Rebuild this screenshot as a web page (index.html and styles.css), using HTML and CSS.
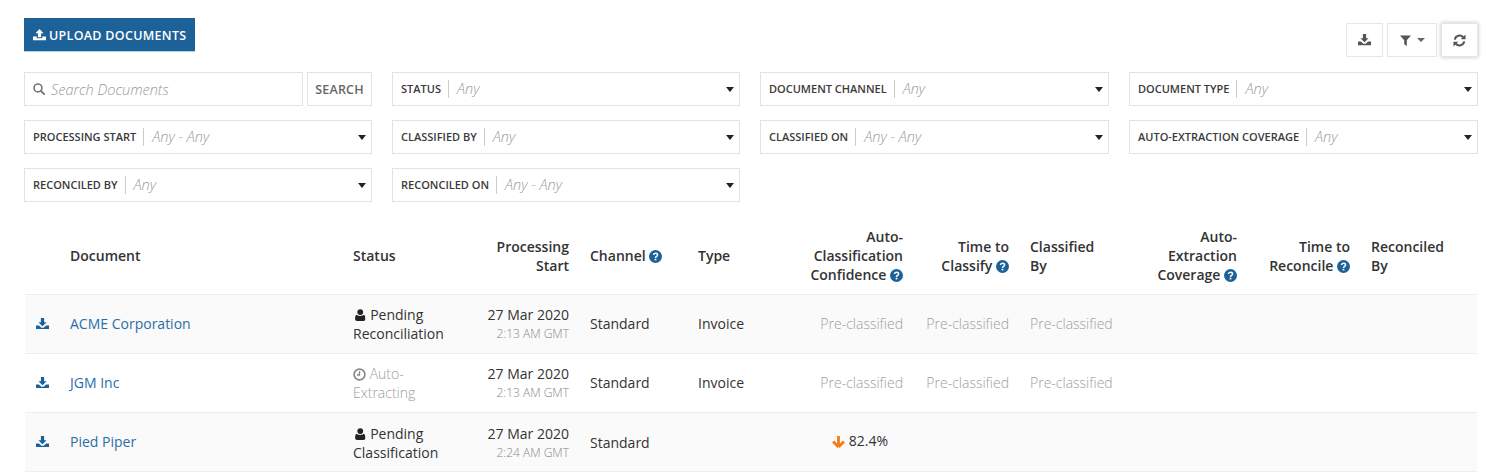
FILE: index.html
```html
<!DOCTYPE html>
<html lang="en">
<head>
<meta charset="utf-8">
<title>Documents</title>
<link rel="stylesheet" href="styles.css">
</head>
<body>
<svg class="sprite" aria-hidden="true">
  <symbol id="i-download" viewBox="0 0 16 14">
    <path d="M6 0h4v5h3L8 10 3 5h3z"/>
    <path d="M0 9h3.600L6.600 11.800h2.800L12.400 9H16v5H0z"/>
  </symbol>
  <symbol id="i-upload" viewBox="0 0 16 14">
    <path d="M8 0l5 5h-3v5H6V5H3z"/>
    <path d="M0 9h4.600v2.400h6.800V9H16v5H0z"/>
  </symbol>
  <symbol id="i-filter" viewBox="0 0 12 12"><path d="M0 .5h12L7.400 5.600V12L4.600 10V5.600z"/></symbol>
  <symbol id="i-refresh" viewBox="0 0 14 14">
    <path d="M1.900 6a5.200 5.200 0 0 1 9.200-2.300M12.100 8a5.200 5.200 0 0 1-9.200 2.300" fill="none" stroke="currentColor" stroke-width="2.200"/>
    <path d="M13.500.5v5.200H8.300zM.5 13.500V8.300h5.200z"/>
  </symbol>
  <symbol id="i-search" viewBox="0 0 14 14">
    <circle cx="5.800" cy="5.800" r="4.600" fill="none" stroke="currentColor" stroke-width="1.900"/>
    <path d="M9.200 9.200l3.800 3.800" stroke="currentColor" stroke-width="2.300" stroke-linecap="round"/>
  </symbol>
  <symbol id="i-user" viewBox="0 0 12 14">
    <circle cx="6" cy="3.600" r="3.400"/>
    <path d="M1.900 6.800c1 1 2.500 1.300 4.100 1.300s3.100-.3 4.100-1.300c1.300.4 1.900 2 1.900 4.600 0 1.700-.9 2.600-2.300 2.600H2.300C.9 14 0 13.100 0 11.400c0-2.600.6-4.200 1.900-4.600z"/>
  </symbol>
  <symbol id="i-clock" viewBox="0 0 14 14">
    <circle cx="7" cy="7" r="5.800" fill="none" stroke="currentColor" stroke-width="1.800"/>
    <path d="M7 3.400v4.100H4.200" fill="none" stroke="currentColor" stroke-width="1.500"/>
  </symbol>
  <symbol id="i-help" viewBox="0 0 12 12">
    <circle cx="6" cy="6" r="6"/>
    <path d="M4.100 4.600c.1-1.100.9-1.700 1.900-1.700 1.100 0 1.900.7 1.900 1.600 0 1.400-1.900 1.400-1.900 2.800" fill="none" stroke="#fff" stroke-width="1.400"/>
    <path d="M5.200 8.100h1.600v1.500H5.200z" fill="#fff"/>
  </symbol>
  <symbol id="i-arrow" viewBox="0 0 12 12">
    <path d="M6 11L1 6M6 11l5-5M6 10.500V1" fill="none" stroke="currentColor" stroke-width="2.600"/>
  </symbol>
</svg>

<header class="top">
  <button class="upload"><svg class="ic ic-btn"><use href="#i-upload"/></svg>UPLOAD DOCUMENTS</button>
  <div class="tools">
    <button class="tool tool-dl"><svg class="ic ic-btn"><use href="#i-download"/></svg></button>
    <button class="tool tool-filter"><svg class="ic ic-filter"><use href="#i-filter"/></svg><span class="caret caret-sm"></span></button>
    <button class="tool tool-refresh"><svg class="ic ic-refresh"><use href="#i-refresh"/></svg></button>
  </div>
</header>

<section class="filters">
  <div class="search-group">
    <div class="search-box"><svg class="ic ic-search"><use href="#i-search"/></svg><span class="placeholder">Search Documents</span></div>
    <button class="search-btn">SEARCH</button>
  </div>
  <div class="select"><span class="label">STATUS</span><span class="value">Any</span><span class="caret"></span></div>
  <div class="select"><span class="label">DOCUMENT CHANNEL</span><span class="value">Any</span><span class="caret"></span></div>
  <div class="select"><span class="label">DOCUMENT TYPE</span><span class="value">Any</span><span class="caret"></span></div>
  <div class="select"><span class="label">PROCESSING START</span><span class="value">Any - Any</span><span class="caret"></span></div>
  <div class="select"><span class="label">CLASSIFIED BY</span><span class="value">Any</span><span class="caret"></span></div>
  <div class="select"><span class="label">CLASSIFIED ON</span><span class="value">Any - Any</span><span class="caret"></span></div>
  <div class="select"><span class="label">AUTO-EXTRACTION COVERAGE</span><span class="value">Any</span><span class="caret"></span></div>
  <div class="select"><span class="label">RECONCILED BY</span><span class="value">Any</span><span class="caret"></span></div>
  <div class="select"><span class="label">RECONCILED ON</span><span class="value">Any - Any</span><span class="caret"></span></div>
</section>

<table class="docs">
  <colgroup>
    <col class="c-icon"><col class="c-doc"><col class="c-status"><col class="c-start"><col class="c-channel"><col class="c-type"><col class="c-conf"><col class="c-time"><col class="c-by"><col class="c-cov"><col class="c-rec"><col class="c-recby">
  </colgroup>
  <thead>
    <tr>
      <th></th>
      <th>Document</th>
      <th>Status</th>
      <th class="r">Processing Start</th>
      <th>Channel <svg class="ic ic-help"><use href="#i-help"/></svg></th>
      <th>Type</th>
      <th class="r">Auto-Classification <span class="nowrap">Confidence <svg class="ic ic-help"><use href="#i-help"/></svg></span></th>
      <th class="r">Time to <span class="nowrap">Classify <svg class="ic ic-help"><use href="#i-help"/></svg></span></th>
      <th>Classified<br>By</th>
      <th class="r">Auto-Extraction <span class="nowrap">Coverage <svg class="ic ic-help"><use href="#i-help"/></svg></span></th>
      <th class="r">Time to <span class="nowrap">Reconcile <svg class="ic ic-help"><use href="#i-help"/></svg></span></th>
      <th>Reconciled<br>By</th>
    </tr>
  </thead>
  <tbody>
    <tr>
      <td class="dl"><svg class="ic ic-dl"><use href="#i-download"/></svg></td>
      <td><a class="doc" href="#">ACME Corporation</a></td>
      <td><svg class="ic ic-user"><use href="#i-user"/></svg> Pending Reconciliation</td>
      <td class="r">27 Mar 2020<small>2:13 AM GMT</small></td>
      <td>Standard</td>
      <td>Invoice</td>
      <td class="r muted">Pre-classified</td>
      <td class="r muted">Pre-classified</td>
      <td class="muted">Pre-classified</td>
      <td></td><td></td><td></td>
    </tr>
    <tr>
      <td class="dl"><svg class="ic ic-dl"><use href="#i-download"/></svg></td>
      <td><a class="doc" href="#">JGM Inc</a></td>
      <td class="muted"><svg class="ic ic-clock"><use href="#i-clock"/></svg> Auto-Extracting</td>
      <td class="r">27 Mar 2020<small>2:13 AM GMT</small></td>
      <td>Standard</td>
      <td>Invoice</td>
      <td class="r muted">Pre-classified</td>
      <td class="r muted">Pre-classified</td>
      <td class="muted">Pre-classified</td>
      <td></td><td></td><td></td>
    </tr>
    <tr>
      <td class="dl"><svg class="ic ic-dl"><use href="#i-download"/></svg></td>
      <td><a class="doc" href="#">Pied Piper</a></td>
      <td class="low"><svg class="ic ic-user"><use href="#i-user"/></svg> Pending Classification</td>
      <td class="r low">27 Mar 2020<small>2:24 AM GMT</small></td>
      <td class="low">Standard</td>
      <td></td>
      <td class="conf"><svg class="ic ic-arrow"><use href="#i-arrow"/></svg> 82.4%</td>
      <td></td><td></td><td></td><td></td><td></td>
    </tr>
  </tbody>
</table>
</body>
</html>
```

FILE: styles.css
```css
* { box-sizing: border-box; }

html, body { margin: 0; height: 473px; overflow: hidden; }

body {
  padding: 18px 24px 0;
  background: #fff;
  color: #333;
  font-family: "Open Sans", sans-serif;
  font-size: 14px;
  line-height: 19px;
}

.sprite { display: none; }

.ic { display: inline-block; fill: currentColor; }

button { font-family: inherit; cursor: pointer; }

.top { display: flex; justify-content: space-between; align-items: flex-start; height: 54px; }

.upload {
  display: flex;
  align-items: center;
  gap: 3px;
  width: 171px;
  height: 34px;
  padding: 1px 0 0 9px;
  background: #1c6299;
  border: 0;
  border-bottom: 1px solid #b5cfe2;
  color: #fff;
  font-size: 12.500px;
  font-weight: 600;
  letter-spacing: .3px;
}

.ic-btn { width: 13px; height: 11.500px; }

.tools { display: flex; gap: 4px; margin-top: 5px; }

.tool {
  display: flex;
  align-items: center;
  justify-content: center;
  height: 34px;
  padding: 0;
  background: #fff;
  border: 1px solid #e6e6e6;
  color: #555;
}

.tool-dl { width: 37px; }
.tool-filter { width: 50px; gap: 6px; }
.tool-refresh { width: 37px; box-shadow: 0 0 4px rgba(0, 0, 0, .25); }

.ic-filter { width: 11px; height: 11px; }
.ic-refresh { width: 13px; height: 13px; }

.caret {
  display: block;
  width: 0;
  height: 0;
  border-style: solid;
  border-width: 5px 4.500px 0;
  border-color: #222 transparent transparent;
}

.caret-sm { border-width: 4px 4px 0; border-top-color: #666; }

.filters {
  display: grid;
  grid-template-columns: 348px 348px 349px 349px;
  column-gap: 20px;
  row-gap: 14px;
}

.search-group { display: flex; gap: 4px; }

.search-box, .select, .search-btn {
  height: 34px;
  background: #fff;
  border: 1px solid #e2e2e2;
}

.search-box {
  flex: 1;
  display: flex;
  align-items: center;
  gap: 6px;
  padding-left: 8px;
}

.ic-search { width: 12px; height: 12px; color: #777; }

.placeholder, .value { color: #999; font-style: italic; font-weight: 300; font-size: 14.500px; }

.search-btn { width: 65px; padding: 0; color: #666; font-size: 12.500px; font-weight: 600; letter-spacing: .2px; }

.select { display: flex; align-items: center; padding: 0 5.500px 0 8px; }

.label { color: #3a3a3a; font-size: 11px; font-weight: 600; line-height: 16px; }

.value {
  margin-left: 7px;
  padding-left: 8px;
  border-left: 1px solid #ccc;
  line-height: 18px;
}

.select .caret { margin-left: auto; }

.docs {
  width: 1452px;
  margin: 16px 0 0 1px;
  border-collapse: collapse;
  table-layout: fixed;
}

.c-icon { width: 35px; }
.c-doc { width: 283px; }
.c-status { width: 120px; }
.c-start { width: 117px; }
.c-channel { width: 108px; }
.c-type { width: 108px; }
.c-conf { width: 118px; }
.c-time { width: 106px; }
.c-by { width: 110px; }
.c-cov { width: 118px; }
.c-rec { width: 113px; }
.c-recby { width: 116px; }

th, td { padding: 0 10px; text-align: left; vertical-align: middle; }

th {
  height: 76px;
  color: #333;
  font-weight: 600;
  border-bottom: 1px solid #eee;
}

td { height: 59px; border-bottom: 1px solid #eee; }

tbody tr:nth-child(odd) td { background: #fafafa; }

th.r, td.r { text-align: right; padding-right: 11px; }

.nowrap { white-space: nowrap; }

.muted { color: #9e9e9e; font-weight: 300; }

small { display: block; color: #888; font-size: 12px; font-weight: 300; line-height: 19px; }

.doc { color: #2a6da5; text-decoration: none; }

.dl { padding: 0; text-align: center; }

.ic-dl { display: block; width: 13px; height: 11.500px; margin: 0 auto; color: #1c6299; }

.ic-help { width: 13px; height: 13px; color: #1c6299; vertical-align: -2px; }

.ic-user { width: 10.500px; height: 12px; color: #222; margin: 0 1px 0 2px; vertical-align: -1px; }

.ic-clock { width: 13px; height: 13px; color: #888; vertical-align: -2px; }

.low { padding-top: 2px; }

.conf { text-align: right; padding: 0 26px 3px 0; white-space: nowrap; }

.ic-arrow { width: 13px; height: 13px; color: #f57c14; vertical-align: -2px; }
```
